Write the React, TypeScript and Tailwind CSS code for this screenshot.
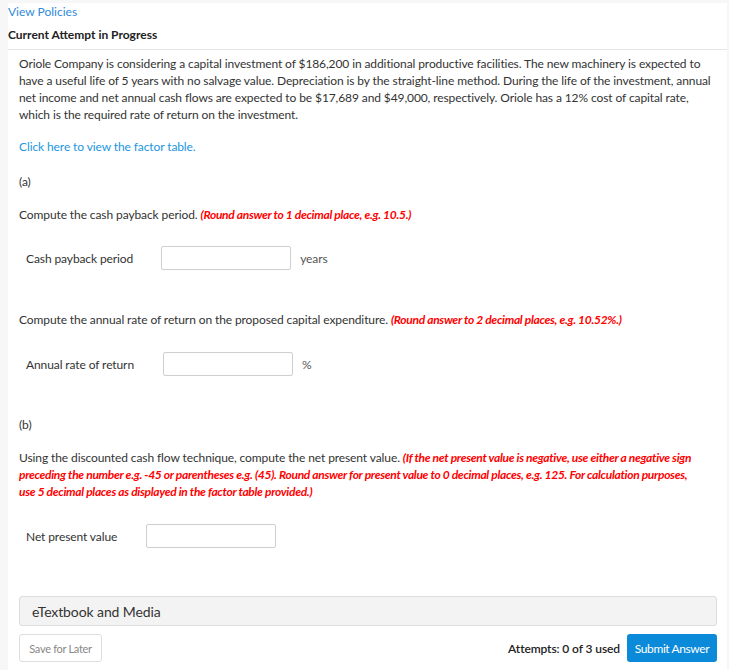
import React from "react";

function AnswerRow({ label, unit, inputMl }: { label: string; unit?: string; inputMl: string }) {
  return (
    <div className="flex items-center h-[24px]">
      <span className="pl-[7px] text-[12px] text-[#333]">{label}</span>
      <input
        type="text"
        className={`${inputMl} w-[130px] h-[24px] border border-[#cfcfcf] rounded-[2px] bg-white outline-none`}
      />
      {unit && <span className="ml-[9px] text-[12px] text-[#555]">{unit}</span>}
    </div>
  );
}

export default function App() {
  return (
    <div
      className="min-h-[670px] bg-[#f7f7f7] pt-[3px] pl-[8px] pr-[2px]"
      style={{ fontFamily: "Lato, 'Open Sans', Arial, sans-serif" }}
    >
      <div className="bg-white min-h-[667px]">
        <div>
          <a className="block text-[12px] leading-[17px] text-[#2f8ad8]" href="#">
            View Policies
          </a>
          <div className="text-[12px] leading-[17px] font-bold text-[#222] mt-[6px]">
            Current Attempt in Progress
          </div>
        </div>
        <div className="border-t border-[#e6e6e6] mt-[6px]" />

        <div className="pl-[11px] pr-[10px] text-[12px] leading-[17px] text-[#333] tracking-[-0.1px]">
          <p className="mt-[5px]">
            Oriole Company is considering a capital investment of $186,200 in additional productive facilities. The new
            machinery is expected to have a useful life of 5 years with no salvage value. Depreciation is by the
            straight-line method. During the life of the investment, annual net income and net annual cash flows are
            expected to be $17,689 and $49,000, respectively. Oriole has a 12% cost of capital rate, which is the required
            rate of return on the investment.
          </p>

          <a className="block mt-[15px] text-[#2196e0]" href="#">
            Click here to view the factor table.
          </a>

          <p className="mt-[18px]">(a)</p>

          <p className="mt-[16px]">
            Compute the cash payback period.{" "}
            <span className="text-[#ff0000] font-bold italic tracking-[-0.3px]">
              (Round answer to 1 decimal place, e.g. 10.5.)
            </span>
          </p>

          <div className="mt-[23px]">
            <AnswerRow label="Cash payback period" unit="years" inputMl="ml-[28px]" />
          </div>

          <p className="mt-[41px]">
            Compute the annual rate of return on the proposed capital expenditure.{" "}
            <span className="text-[#ff0000] font-bold italic tracking-[-0.3px]">
              (Round answer to 2 decimal places, e.g. 10.52%.)
            </span>
          </p>

          <div className="mt-[24px]">
            <AnswerRow label="Annual rate of return" unit="%" inputMl="ml-[29px]" />
          </div>

          <p className="mt-[40px]">(b)</p>

          <p className="mt-[16px] pr-[20px]">
            Using the discounted cash flow technique, compute the net present value.{" "}
            <span className="text-[#ff0000] font-bold italic tracking-[-0.3px]">
              (If the net present value is negative, use either a negative sign preceding the number e.g. -45 or
              parentheses e.g. (45). Round answer for present value to 0 decimal places, e.g. 125. For calculation
              purposes, use 5 decimal places as displayed in the factor table provided.)
            </span>
          </p>

          <div className="mt-[24px]">
            <AnswerRow label="Net present value" inputMl="ml-[29px]" />
          </div>

          <div className="mt-[48px] h-[30px] bg-[#f3f3f3] border border-[#dddddd] rounded-[3px] flex items-center pl-[12px] text-[14px] text-[#333]">
            eTextbook and Media
          </div>

          <div className="mt-[8px] flex items-center justify-between">
            <button className="h-[28px] w-[83px] border border-[#dddddd] rounded-[3px] bg-white text-[11px] text-[#888] tracking-[-0.3px]">
              Save for Later
            </button>
            <div className="flex items-center">
              <span className="text-[12px] font-semibold text-[#222] mr-[7px]">Attempts: 0 of 3 used</span>
              <button className="h-[28px] w-[90px] rounded-[3px] bg-[#0b8ad9] text-white text-[12px] tracking-[-0.4px]">
                Submit Answer
              </button>
            </div>
          </div>
        </div>
      </div>
    </div>
  );
}
